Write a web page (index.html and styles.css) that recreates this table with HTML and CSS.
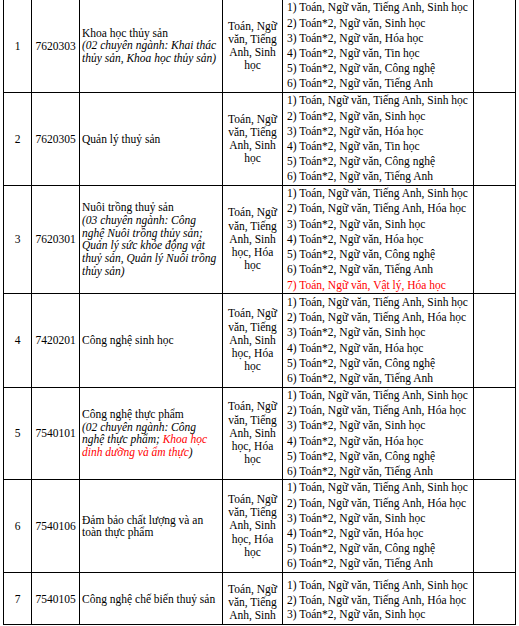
FILE: index.html
```html
<!DOCTYPE html>
<html lang="vi">
<head>
<meta charset="utf-8">
<link rel="stylesheet" href="styles.css">
</head>
<body>
<div class="frame">
  <div class="grid">
    <!-- Row 1 -->
    <div class="c c1">1</div>
    <div class="c c2">7620303</div>
    <div class="c c3"><span class="n">Khoa học thủy sản</span><span class="i">(02 chuyên ngành: Khai thác<br>thủy sản, Khoa học thủy sản)</span></div>
    <div class="c c4">Toán, Ngữ<br>văn, Tiếng<br>Anh, Sinh<br>học</div>
    <div class="c c5">
      <div class="li">1) Toán, Ngữ văn, Tiếng Anh, Sinh học</div>
      <div class="li">2) Toán*2, Ngữ văn, Sinh học</div>
      <div class="li">3) Toán*2, Ngữ văn, Hóa học</div>
      <div class="li">4) Toán*2, Ngữ văn, Tin học</div>
      <div class="li">5) Toán*2, Ngữ văn, Công nghệ</div>
      <div class="li">6) Toán*2, Ngữ văn, Tiếng Anh</div>
    </div>
    <div class="c c6"></div>

    <!-- Row 2 -->
    <div class="c c1">2</div>
    <div class="c c2">7620305</div>
    <div class="c c3"><span class="n">Quản lý thuỷ sản</span></div>
    <div class="c c4">Toán, Ngữ<br>văn, Tiếng<br>Anh, Sinh<br>học</div>
    <div class="c c5">
      <div class="li">1) Toán, Ngữ văn, Tiếng Anh, Sinh học</div>
      <div class="li">2) Toán*2, Ngữ văn, Sinh học</div>
      <div class="li">3) Toán*2, Ngữ văn, Hóa học</div>
      <div class="li">4) Toán*2, Ngữ văn, Tin học</div>
      <div class="li">5) Toán*2, Ngữ văn, Công nghệ</div>
      <div class="li">6) Toán*2, Ngữ văn, Tiếng Anh</div>
    </div>
    <div class="c c6"></div>

    <!-- Row 3 -->
    <div class="c c1">3</div>
    <div class="c c2">7620301</div>
    <div class="c c3"><span class="n">Nuôi trồng thuỷ sản</span><span class="i">(03 chuyên ngành: Công<br>nghệ Nuôi trồng thủy sản;<br>Quản lý sức khỏe động vật<br>thuỷ sản, Quản lý Nuôi trồng<br>thủy sản)</span></div>
    <div class="c c4">Toán, Ngữ<br>văn, Tiếng<br>Anh, Sinh<br>học, Hóa<br>học</div>
    <div class="c c5">
      <div class="li">1) Toán, Ngữ văn, Tiếng Anh, Sinh học</div>
      <div class="li">2) Toán, Ngữ văn, Tiếng Anh, Hóa học</div>
      <div class="li">3) Toán*2, Ngữ văn, Sinh học</div>
      <div class="li">4) Toán*2, Ngữ văn, Hóa học</div>
      <div class="li">5) Toán*2, Ngữ văn, Công nghệ</div>
      <div class="li">6) Toán*2, Ngữ văn, Tiếng Anh</div>
      <div class="li red">7) Toán, Ngữ văn, Vật lý, Hóa học</div>
    </div>
    <div class="c c6"></div>

    <!-- Row 4 -->
    <div class="c c1">4</div>
    <div class="c c2">7420201</div>
    <div class="c c3"><span class="n">Công nghệ sinh học</span></div>
    <div class="c c4">Toán, Ngữ<br>văn, Tiếng<br>Anh, Sinh<br>học, Hóa<br>học</div>
    <div class="c c5">
      <div class="li">1) Toán, Ngữ văn, Tiếng Anh, Sinh học</div>
      <div class="li">2) Toán, Ngữ văn, Tiếng Anh, Hóa học</div>
      <div class="li">3) Toán*2, Ngữ văn, Sinh học</div>
      <div class="li">4) Toán*2, Ngữ văn, Hóa học</div>
      <div class="li">5) Toán*2, Ngữ văn, Công nghệ</div>
      <div class="li">6) Toán*2, Ngữ văn, Tiếng Anh</div>
    </div>
    <div class="c c6"></div>

    <!-- Row 5 -->
    <div class="c c1">5</div>
    <div class="c c2">7540101</div>
    <div class="c c3"><span class="n">Công nghệ thực phẩm</span><span class="i">(02 chuyên ngành: Công<br>nghệ thực phẩm; <span class="red">Khoa học<br>dinh dưỡng và ẩm thực</span>)</span></div>
    <div class="c c4">Toán, Ngữ<br>văn, Tiếng<br>Anh, Sinh<br>học, Hóa<br>học</div>
    <div class="c c5">
      <div class="li">1) Toán, Ngữ văn, Tiếng Anh, Sinh học</div>
      <div class="li">2) Toán, Ngữ văn, Tiếng Anh, Hóa học</div>
      <div class="li">3) Toán*2, Ngữ văn, Sinh học</div>
      <div class="li">4) Toán*2, Ngữ văn, Hóa học</div>
      <div class="li">5) Toán*2, Ngữ văn, Công nghệ</div>
      <div class="li">6) Toán*2, Ngữ văn, Tiếng Anh</div>
    </div>
    <div class="c c6"></div>

    <!-- Row 6 -->
    <div class="c c1">6</div>
    <div class="c c2">7540106</div>
    <div class="c c3"><span class="n">Đảm bảo chất lượng và an<br>toàn thực phẩm</span></div>
    <div class="c c4">Toán, Ngữ<br>văn, Tiếng<br>Anh, Sinh<br>học, Hóa<br>học</div>
    <div class="c c5">
      <div class="li">1) Toán, Ngữ văn, Tiếng Anh, Sinh học</div>
      <div class="li">2) Toán, Ngữ văn, Tiếng Anh, Hóa học</div>
      <div class="li">3) Toán*2, Ngữ văn, Sinh học</div>
      <div class="li">4) Toán*2, Ngữ văn, Hóa học</div>
      <div class="li">5) Toán*2, Ngữ văn, Công nghệ</div>
      <div class="li">6) Toán*2, Ngữ văn, Tiếng Anh</div>
    </div>
    <div class="c c6"></div>

    <!-- Row 7 (cut at the bottom edge of the view) -->
    <div class="c c1 last mid">7</div>
    <div class="c c2 last mid">7540105</div>
    <div class="c c3 last mid"><span class="n">Công nghệ chế biến thuỷ sản</span></div>
    <div class="c c4 last sub">Toán, Ngữ<br>văn, Tiếng<br>Anh, Sinh</div>
    <div class="c c5 last top">
      <div class="li">1) Toán, Ngữ văn, Tiếng Anh, Sinh học</div>
      <div class="li">2) Toán, Ngữ văn, Tiếng Anh, Hóa học</div>
      <div class="li">3) Toán*2, Ngữ văn, Sinh học</div>
    </div>
    <div class="c c6 last"></div>
  </div>
</div>
</body>
</html>
```

FILE: styles.css
```css
html, body {
  margin: 0;
  padding: 0;
  background: #fff;
}

body {
  font-family: "Liberation Serif", "Times New Roman", serif;
  font-size: 11.5px;
  color: #000;
}

.frame {
  margin-left: 3px;
  width: 513px;
  height: 624px;
  overflow: hidden;
  border-bottom: 1px solid #000;
}

.grid {
  display: grid;
  grid-template-columns: 29px 48px 143px 60px 191px 42px;
  grid-template-rows: 93px 93px 108px 94px 92px 93px 51px;
}

.c {
  box-sizing: border-box;
  border-right: 1px solid #000;
  border-bottom: 1px solid #000;
  display: flex;
  flex-direction: column;
  justify-content: center;
  white-space: nowrap;
  line-height: 13px;
}

.c1 {
  border-left: 1px solid #000;
  align-items: center;
}

.c2 {
  align-items: center;
}

.c3 {
  padding-left: 2px;
}

.c3 .n,
.c3 .i {
  display: block;
}

.c3 .n {
  line-height: 12.5px;
}

.c3 .i {
  font-style: italic;
  line-height: 12.8px;
}

.c4 {
  text-align: center;
  line-height: 13.2px;
}

.c5 {
  padding-left: 4px;
}

.li {
  line-height: 15.2px;
}

.red {
  color: #ff0000;
}

.last {
  justify-content: flex-start;
  border-bottom: none;
}

.last.mid {
  padding-top: 20px;
}

.last.sub {
  padding-top: 10px;
}

.last.top {
  padding-top: 5px;
  line-height: 14.6px;
}

.last.top .li {
  line-height: 14.6px;
}
```
